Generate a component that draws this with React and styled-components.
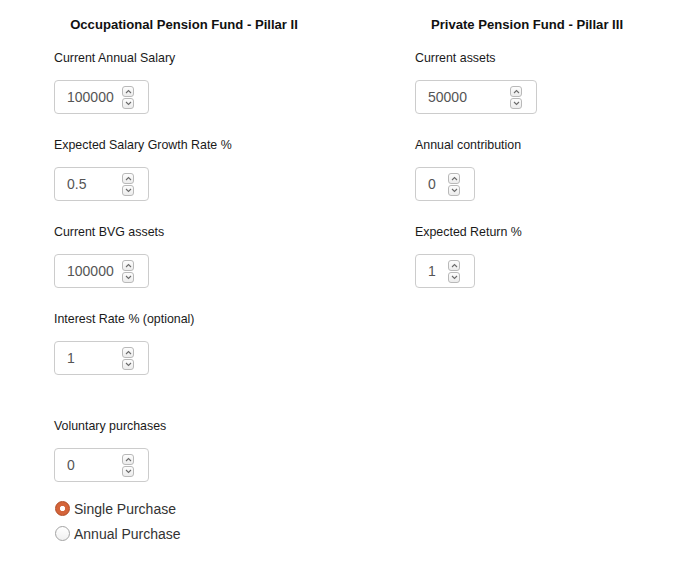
import React from 'react';
import styled, {createGlobalStyle} from 'styled-components';

const pillarTwo = [
    {label: 'Current Annual Salary', value: '100000', width: 95},
    {label: 'Expected Salary Growth Rate %', value: '0.5', width: 95},
    {label: 'Current BVG assets', value: '100000', width: 95},
    {label: 'Interest Rate % (optional)', value: '1', width: 95},
];

const pillarThree = [
    {label: 'Current assets', value: '50000', width: 122},
    {label: 'Annual contribution', value: '0', width: 60},
    {label: 'Expected Return %', value: '1', width: 60},
];

const Chevron = ({down})=> (
    <svg width="7" height="5" viewBox="0 0 7 5">
        <path d={down ? 'M1 1 L3.5 3.5 L6 1' : 'M1 4 L3.5 1.5 L6 4'} fill="none" stroke="#6b6b6b" strokeWidth="1.1" />
    </svg>
);

const Field = ({label, value, width, extra})=> (
    <Group $extra={extra}>
        <Label>{label}</Label>
        <InputWrap $width={width}>
            <NumberInput type="number" defaultValue={value} />
            <Spinner>
                <SpinBox><Chevron /></SpinBox>
                <SpinBox><Chevron down /></SpinBox>
            </Spinner>
        </InputWrap>
    </Group>
);

const App = ()=> {
    return (
        <Page>
            <GlobalStyle />
            <Column>
                <Heading>Occupational Pension Fund - Pillar II</Heading>
                {pillarTwo.map(item=> <Field key={item.label} {...item} />)}
                <Field label="Voluntary purchases" value="0" width={95} extra />
                <RadioList>
                    <RadioRow>
                        <Radio type="radio" name="purchase" defaultChecked />
                        <span>Single Purchase</span>
                    </RadioRow>
                    <RadioRow>
                        <Radio type="radio" name="purchase" />
                        <span>Annual Purchase</span>
                    </RadioRow>
                </RadioList>
            </Column>
            <Column>
                <Heading>Private Pension Fund - Pillar III</Heading>
                {pillarThree.map(item=> <Field key={item.label} {...item} />)}
            </Column>
        </Page>
    );
};

const GlobalStyle = createGlobalStyle`
    body {
        margin : 0;
        background : #fff;
        font-family : "Liberation Sans", Arial, sans-serif;
    }
`;
const Page = styled.div`
    display : grid;
    grid-template-columns : 260px 224px;
    column-gap : 101px;
    padding : 16px 0 0 54px;
    align-items : start;
`;
const Column = styled.div`
    display : flex;
    flex-direction : column;
`;
const Heading = styled.div`
    text-align : center;
    font-weight : 700;
    font-size : 13.1px;
    line-height : 18px;
    color : #111;
    margin-bottom : 16px;
`;
const Group = styled.div`
    display : flex;
    flex-direction : column;
    align-items : flex-start;
    margin-top : ${props=> props.$extra ? '20px' : '0'};
    margin-bottom : 23px;
`;
const Label = styled.label`
    font-size : 12.4px;
    line-height : 16px;
    color : #1a1a1a;
    margin-bottom : 14px;
`;
const InputWrap = styled.div`
    position : relative;
    width : ${props=> props.$width}px;
    height : 34px;
`;
const NumberInput = styled.input`
    box-sizing : border-box;
    width : 100%;
    height : 100%;
    padding : 0 30px 0 12px;
    border : 1px solid #ccc;
    border-radius : 4px;
    font-family : "Liberation Sans", Arial, sans-serif;
    font-size : 14px;
    color : #555;
    background : #fff;
    -moz-appearance : textfield;

    &::-webkit-inner-spin-button,
    &::-webkit-outer-spin-button {
        -webkit-appearance : none;
        margin : 0;
    }
`;
const Spinner = styled.div`
    position : absolute;
    right : 15px;
    top : 6px;
    display : flex;
    flex-direction : column;
    gap : 1px;
    pointer-events : none;
`;
const SpinBox = styled.div`
    box-sizing : border-box;
    width : 12px;
    height : 11px;
    border : 1px solid #b9b9b9;
    border-radius : 3px;
    background : linear-gradient(#fdfdfd, #ececec);
    display : flex;
    align-items : center;
    justify-content : center;
`;
const RadioList = styled.div`
    display : flex;
    flex-direction : column;
    margin-top : -9px;
`;
const RadioRow = styled.label`
    display : flex;
    align-items : center;
    height : 25px;
    font-size : 14px;
    color : #333;
`;
const Radio = styled.input`
    appearance : none;
    -webkit-appearance : none;
    box-sizing : border-box;
    width : 15px;
    height : 15px;
    margin : 0 4px 0 1px;
    border : 1px solid #a3a3a3;
    border-radius : 50%;
    background : linear-gradient(#fff, #f0f0f0);

    &:checked {
        border-color : #b04a22;
        background : radial-gradient(circle, #fff 0 2.2px, #d4643a 3px);
    }
`;

export default App;
